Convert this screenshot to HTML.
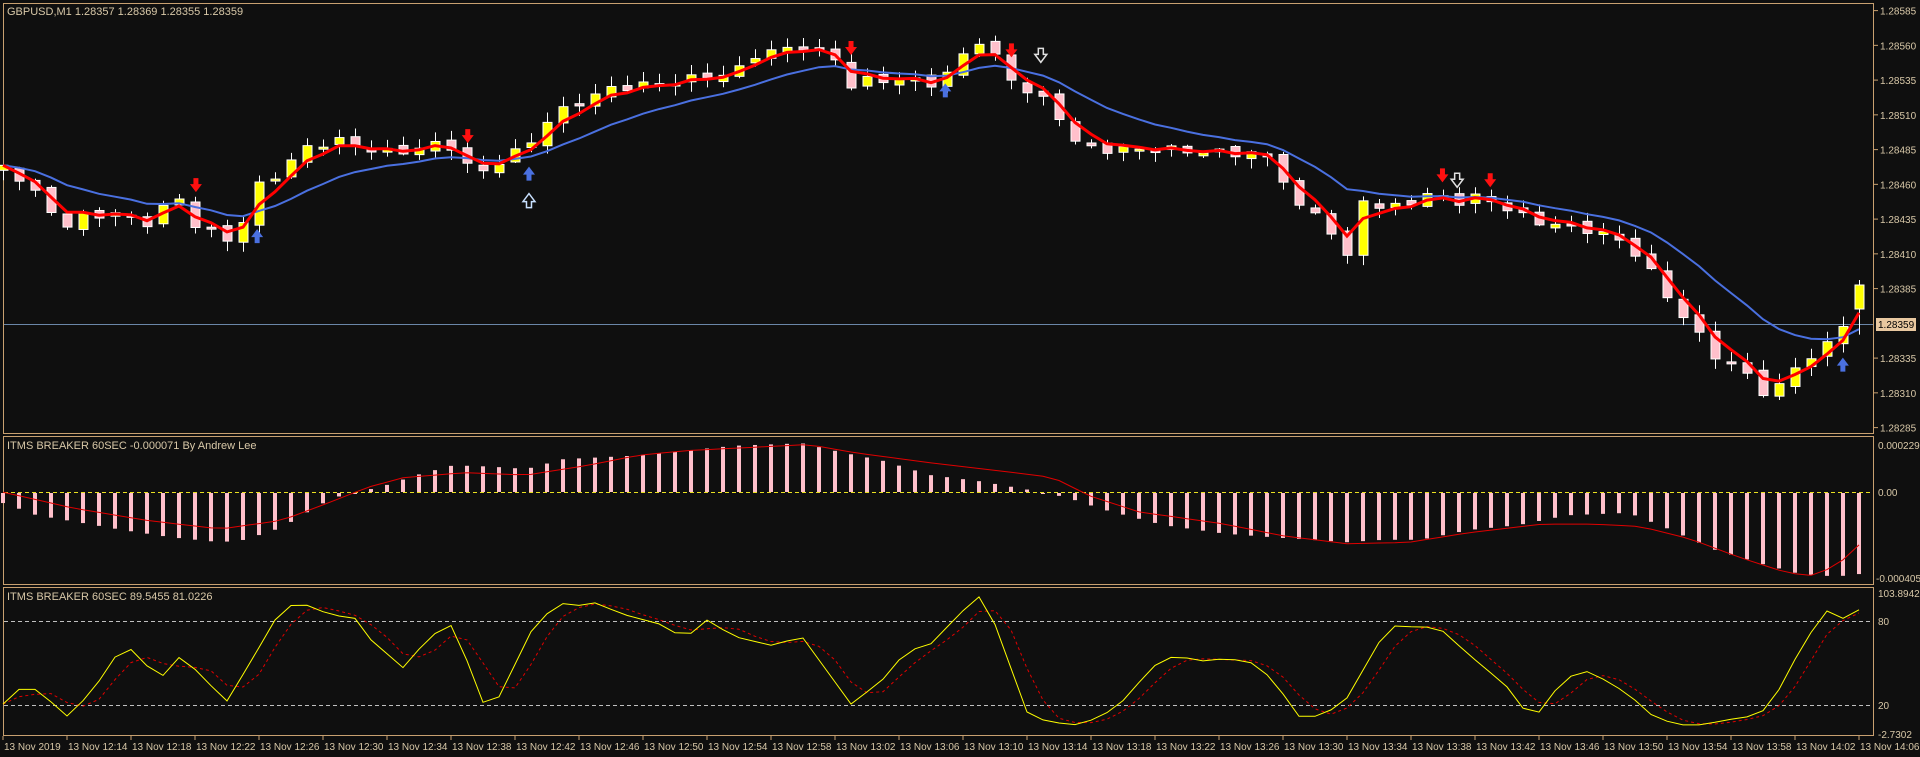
<!DOCTYPE html>
<html><head><meta charset="utf-8"><style>
html,body{margin:0;padding:0;background:#0f0f0f;width:1920px;height:757px;overflow:hidden}
svg{display:block}
text{font-family:"Liberation Sans",sans-serif;font-size:11px;fill:#d8c8a8}
.ax text,text.ax{font-size:10px}
</style></head><body>
<svg id="s" width="1920" height="757" xmlns="http://www.w3.org/2000/svg">
<rect width="1920" height="757" fill="#0f0f0f"/>
<g fill="none" stroke="#c8a070" stroke-width="1">
<rect x="3.5" y="3.5" width="1870" height="430"/>
<rect x="3.5" y="436.5" width="1870" height="148"/>
<rect x="3.5" y="587.5" width="1870" height="148"/>
</g>
<line x1="4" y1="324.5" x2="1873" y2="324.5" stroke="#6a86a8" stroke-width="1"/>
<line x1="4" y1="492.5" x2="1873" y2="492.5" stroke="#e8e020" stroke-dasharray="4,3"/>
<line x1="4" y1="621.5" x2="1873" y2="621.5" stroke="#c0c0c0" stroke-dasharray="4,3"/>
<line x1="4" y1="705.5" x2="1873" y2="705.5" stroke="#c0c0c0" stroke-dasharray="4,3"/>
<g id="g"></g>
<text x="7" y="15">GBPUSD,M1  1.28357 1.28369 1.28355 1.28359</text>
<text x="7" y="449">ITMS BREAKER 60SEC -0.000071  By Andrew Lee</text>
<text x="7" y="600">ITMS BREAKER 60SEC 89.5455 81.0226</text>
<g id="ax" class="ax"></g>
<rect x="1876" y="318" width="40" height="13" fill="#e8c8a0"/>
<g class="ax">
<text x="1878" y="328" style="fill:#000">1.28359</text>
<text x="1878" y="449">0.000229</text>
<text x="1878" y="496">0.00</text>
<text x="1876" y="582">-0.000405</text>
<text x="1878" y="597">103.8942</text>
<text x="1878" y="625">80</text>
<text x="1878" y="709">20</text>
<text x="1878" y="738">-2.7302</text>
</g>
</svg>
<script>
var NS="http://www.w3.org/2000/svg",g=document.getElementById('g'),ax=document.getElementById('ax');
function el(n,a,p){var e=document.createElementNS(NS,n);for(var k in a)e.setAttribute(k,a[k]);(p||g).appendChild(e);return e;}
var pl=["1.28585","1.28560","1.28535","1.28510","1.28485","1.28460","1.28435","1.28410","1.28385","1.28335","1.28310","1.28285"];
for(var i=0;i<12;i++){var idx=i<9?i:i+1;var y=10.6+idx*34.75;el('line',{x1:1874,y1:y,x2:1878,y2:y,stroke:'#c8a070'},ax);var t=el('text',{x:1880,y:y+4},ax);t.textContent=pl[i];}
var labs=["13 Nov 2019"];for(var m=14;m<=126;m+=4){var h=12+Math.floor(m/60),mm=m%60;labs.push("13 Nov "+h+":"+(mm<10?"0":"")+mm);}
for(var i=0;i<labs.length;i++){var x=3+64*i;el('line',{x1:x,y1:736,x2:x,y2:740,stroke:'#c8a070'},ax);var t=el('text',{x:x+1,y:750},ax);t.textContent=labs[i];}
function mk(K){return function(xd){if(xd<=K[0][0])return K[0][1];for(var j=1;j<K.length;j++){if(xd<=K[j][0]){var a=K[j-1],b=K[j];return a[1]+(b[1]-a[1])*(xd-a[0])/(b[0]-a[0]);}}return K[K.length-1][1];};}
var interp=mk([[5,135],[40,170],[55,185],[70,175],[100,175],[120,182],[145,160],[160,185],[185,195],[200,180],[212,150],[230,140],[250,120],[275,115],[290,118],[310,125],[340,122],[365,115],[380,135],[395,140],[410,130],[430,120],[445,100],[460,90],[480,80],[500,72],[540,68],[580,62],[600,60],[615,45],[630,42],[655,38],[680,45],[695,70],[710,65],[740,65],[760,68],[775,60],[790,40],[800,33],[815,50],[830,70],[850,80],[870,100],[880,120],[900,122],[950,122],[1000,125],[1030,125],[1045,140],[1060,170],[1080,175],[1090,195],[1100,212],[1110,160],[1130,172],[1150,165],[1170,158],[1190,165],[1210,160],[1230,170],[1250,180],[1280,185],[1300,188],[1320,195],[1340,210],[1360,240],[1380,265],[1400,290],[1420,300],[1440,320],[1455,315],[1470,295],[1490,285],[1505,265],[1518,240]]);
var N=117,C=[],O=[],H=[],L=[],X=[];
for(var i=0;i<N;i++){X[i]=3+16*i;var c=interp(X[i]/1.2245)*1.2245+Math.sin(i*2.3)*4;C[i]=c;O[i]=i?C[i-1]+Math.sin(i*1.7)*3:c+5;var hi=Math.min(O[i],C[i]),lo=Math.max(O[i],C[i]);H[i]=hi-Math.abs(Math.sin(i*3.1))*9-1;L[i]=lo+Math.abs(Math.cos(i*2.7))*9+1;}
C[N-1]=285;O[N-1]=309;H[N-1]=280;
for(var i=0;i<N;i++){var x=X[i];el('line',{x1:x+.5,y1:H[i],x2:x+.5,y2:L[i],stroke:'#fff'});var by=Math.min(O[i],C[i]),hgt=Math.max(2,Math.abs(O[i]-C[i]));el('rect',{x:x-4,y:by,width:9,height:hgt,fill:C[i]<O[i]?'#ffff00':'#ffc0cb',stroke:'#fff','stroke-width':1});}
function ema(a,p){var k=2/(p+1),r=[a[0]];for(var i=1;i<a.length;i++)r[i]=r[i-1]+k*(a[i]-r[i-1]);return r;}
function pts(ys,f){return ys.map(function(v,i){return X[i]+','+(f?f(v):v).toFixed(1)}).join(' ');}
var blue=ema(C,12),red=ema(C,3);
el('polyline',{points:pts(blue),fill:'none',stroke:'#4a70e0','stroke-width':2});
el('polyline',{points:pts(red),fill:'none',stroke:'#ff0000','stroke-width':3});
function arrow(xd,yd,dir,col,hollow){var x=xd*1.2245,y=yd*1.2245,s=dir;var d='M'+(x-2.5)+' '+(y-8*s)+' L'+(x+2.5)+' '+(y-8*s)+' L'+(x+2.5)+' '+(y-2*s)+' L'+(x+6)+' '+(y-2*s)+' L'+x+' '+(y+6*s)+' L'+(x-6)+' '+(y-2*s)+' L'+(x-2.5)+' '+(y-2*s)+'Z';el('path',{d:d,fill:hollow?'none':col,stroke:hollow?col:'none','stroke-width':1.5});}
[[160,152],[382,112],[695,40],[826,42],[1178,144],[1217,148]].forEach(function(a){arrow(a[0],a[1],1,'#ff1010');});
[[210,192],[432,141],[772,73],[1505,297]].forEach(function(a){arrow(a[0],a[1],-1,'#4a70e0');});
arrow(432,163,-1,'#c8e0ff',true);arrow(850,46,1,'#e0e0e0',true);arrow(1190,148,1,'#e0e0e0',true);
// histogram
var hf=mk([[3,410],[30,420],[60,425],[100,432],[140,438],[180,442],[200,440],[230,430],[260,412],[275,405],[290,402],[310,398],[340,388],[370,380],[400,381],[430,383],[460,375],[520,372],[560,368],[600,364],[655,362],[690,370],[720,376],[760,388],[800,393],[840,400],[870,405],[900,415],[950,428],[1000,435],[1040,438],[1070,440],[1100,442],[1130,440],[1160,440],[1200,432],[1240,428],[1280,420],[1330,418],[1360,430],[1400,448],[1440,460],[1470,468],[1500,470],[1518,468]]);
var sg=mk([[3,402],[60,415],[120,425],[180,432],[230,425],[270,410],[300,398],[330,390],[380,386],[430,388],[480,380],[520,372],[560,368],[620,365],[660,363],[700,370],[760,378],[820,385],[860,390],[890,405],[930,418],[1000,428],[1050,438],[1100,444],[1150,443],[1200,435],[1260,428],[1300,428],[1340,430],[1380,440],[1420,455],[1460,468],[1480,470],[1500,462],[1518,445]]);
var Z=492,S=[];
for(var i=0;i<N;i++){var yv=hf(X[i]/1.2245)*1.2245;var t0=Math.min(yv,Z),hh=Math.max(1,Math.abs(yv-Z));el('rect',{x:X[i]-2,y:yv<Z?t0:Z+1,width:4,height:hh,fill:'#ffc0cb'});S[i]=sg(X[i]/1.2245)*1.2245;}
el('polyline',{points:pts(S),fill:'none',stroke:'#e00000','stroke-width':1});
// stochastic
var st=mk([[3,575],[15,563],[30,563],[55,585],[75,565],[95,535],[108,530],[130,555],[148,535],[185,573],[205,540],[230,497],[245,492],[270,502],[290,505],[300,520],[330,546],[350,520],[370,510],[395,575],[410,568],[430,520],[455,492],[470,495],[485,492],[510,502],[540,510],[560,522],[575,505],[600,520],[630,527],[655,520],[695,575],[720,556],[740,532],[760,526],[785,500],[800,487],[810,503],[840,585],[860,590],[880,592],[900,585],[920,570],[940,545],[960,535],[980,540],[1000,538],[1020,540],[1040,555],[1060,585],[1080,585],[1100,570],[1130,518],[1145,507],[1160,517],[1170,508],[1200,535],[1230,560],[1245,580],[1260,582],[1275,555],[1295,548],[1310,555],[1330,567],[1350,585],[1370,592],[1390,592],[1410,588],[1430,585],[1445,578],[1465,540],[1490,498],[1505,505],[1518,498]]);
var Ky=[],Dy=[];for(var i=0;i<N;i++)Ky[i]=st(X[i]/1.2245)*1.2245;
for(var i=0;i<N;i++){var s=0,n=0;for(var j=Math.max(0,i-2);j<=i;j++){s+=Ky[j];n++;}Dy[i]=s/n;}
el('polyline',{points:pts(Dy),fill:'none',stroke:'#e00000','stroke-width':1,'stroke-dasharray':'3,3'});
el('polyline',{points:pts(Ky),fill:'none',stroke:'#ffff00','stroke-width':1});
</script>
</body></html>
